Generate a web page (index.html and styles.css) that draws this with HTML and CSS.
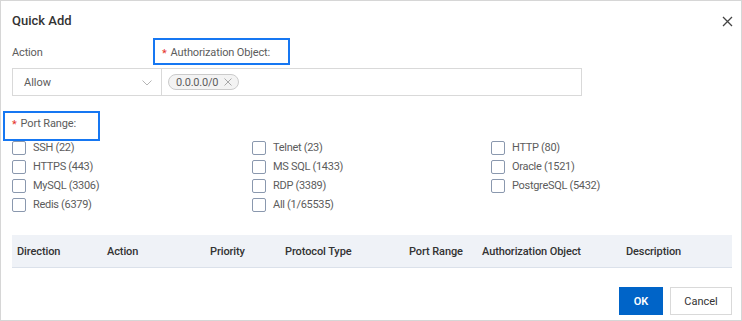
FILE: index.html
```html
<!DOCTYPE html>
<html lang="en">
<head>
    <meta charset="UTF-8">
    <title>Quick Add</title>
    <link rel="stylesheet" href="styles.css">
</head>
<body>

<div class="dialog">
    <div class="dlg-head">
        <h2>Quick Add</h2>
        <span class="close">
            <svg width="11" height="11" viewBox="0 0 11 11"><path d="M1 1 L10 10 M10 1 L1 10" stroke="#444" stroke-width="1.3" fill="none"/></svg>
        </span>
    </div>

    <div class="label-row">
        <span class="lbl lbl-action">Action</span>
        <span class="lbl req mark mark-auth">Authorization Object:</span>
    </div>

    <div class="input-row">
        <div class="select">
            <span>Allow</span>
            <svg width="10" height="6" viewBox="0 0 10 6"><path d="M0.5 0.5 L5 5 L9.5 0.5" stroke="#b5b5b5" stroke-width="1" fill="none"/></svg>
        </div>
        <div class="tag-input">
            <span class="tag">0.0.0.0/0
                <svg class="tag-x" width="8" height="8" viewBox="0 0 8 8"><path d="M0.5 0.5 L7.5 7.5 M7.5 0.5 L0.5 7.5" stroke="#a8a8a8" stroke-width="1" fill="none"/></svg>
            </span>
        </div>
    </div>

    <div class="port-label">
        <span class="lbl req mark mark-port">Port Range:</span>
    </div>

    <div class="checks">
        <label class="check"><span class="box"></span>SSH (22)</label>
        <label class="check"><span class="box"></span>Telnet (23)</label>
        <label class="check"><span class="box"></span>HTTP (80)</label>
        <label class="check"><span class="box"></span>HTTPS (443)</label>
        <label class="check"><span class="box"></span>MS SQL (1433)</label>
        <label class="check"><span class="box"></span>Oracle (1521)</label>
        <label class="check"><span class="box"></span>MySQL (3306)</label>
        <label class="check"><span class="box"></span>RDP (3389)</label>
        <label class="check"><span class="box"></span>PostgreSQL (5432)</label>
        <label class="check"><span class="box"></span>Redis (6379)</label>
        <label class="check"><span class="box"></span>All (1/65535)</label>
    </div>

    <div class="table-head">
        <span>Direction</span>
        <span>Action</span>
        <span>Priority</span>
        <span>Protocol Type</span>
        <span>Port Range</span>
        <span>Authorization Object</span>
        <span>Description</span>
    </div>

    <div class="dlg-foot">
        <button class="btn btn-ok">OK</button>
        <button class="btn">Cancel</button>
    </div>
</div>

</body>
</html>
```

FILE: styles.css
```css
html, body {
    margin: 0;
    padding: 0;
    background-color: #fff;
}
body {
    font-family: Roboto, "Liberation Sans", sans-serif;
    font-size: 11px;
    color: #5c5c5c;
}
.dialog {
    box-sizing: border-box;
    width: 742px;
    height: 321px;
    border: 1px solid #d6d6d6;
    padding: 0 9px 0 11px;
}
.dlg-head {
    display: flex;
    justify-content: space-between;
    align-items: flex-start;
    height: 37px;
    padding-top: 10px;
    box-sizing: border-box;
}
.dlg-head h2 {
    margin: 0;
    font-size: 13px;
    font-weight: 500;
    line-height: 20px;
    color: #333;
}
.close {
    display: block;
    margin-top: 5px;
    margin-right: -1px;
    line-height: 0;
}
.label-row {
    display: flex;
    height: 27px;
}
.lbl {
    line-height: 20px;
    color: #5c5c5c;
    letter-spacing: -0.15px;
}
.lbl-action {
    width: 150px;
    padding-top: 5px;
}
.req::before {
    content: "*";
    color: #e5322d;
    margin-right: 4px;
    position: relative;
    top: 1px;
}
.mark {
    position: relative;
}
.mark::after {
    content: "";
    position: absolute;
    box-sizing: border-box;
    border: 2px solid #1677f2;
}
.mark-auth {
    padding-top: 5px;
}
.mark-auth::after {
    left: -9px;
    top: 0;
    width: 137px;
    height: 27px;
}
.input-row {
    display: flex;
    margin-top: 3px;
    height: 28px;
}
.select {
    box-sizing: border-box;
    width: 150px;
    border: 1px solid #d9d9d9;
    display: flex;
    align-items: center;
    justify-content: space-between;
    padding: 0 9px 0 11px;
}
.select svg {
    margin-top: 2px;
}
.tag-input {
    box-sizing: border-box;
    width: 420px;
    border: 1px solid #d9d9d9;
    border-left: 0;
    display: flex;
    align-items: center;
    padding-left: 6px;
}
.tag {
    display: inline-flex;
    align-items: center;
    box-sizing: border-box;
    height: 16px;
    padding: 0 6px 0 7px;
    border: 1px solid #cbcbcb;
    border-radius: 8px;
    background-color: #f3f3f3;
    letter-spacing: -0.2px;
}
.tag-x {
    margin-left: 6px;
}
.port-label {
    margin-top: 18px;
    height: 20px;
    margin-bottom: 4px;
}
.mark-port::after {
    left: -9px;
    top: -6px;
    width: 97px;
    height: 30px;
}
.checks {
    display: grid;
    grid-template-columns: 240px 239px 1fr;
    grid-auto-rows: 19px;
}
.check {
    display: flex;
    align-items: center;
    letter-spacing: -0.3px;
}
.box {
    box-sizing: border-box;
    width: 14px;
    height: 14px;
    border: 1px solid #8a98ae;
    border-radius: 2px;
    margin-right: 7px;
    background-color: #fff;
}
.table-head {
    display: grid;
    grid-template-columns: 90px 103px 75px 124px 73px 144px 1fr;
    height: 33px;
    box-sizing: border-box;
    margin-top: 21px;
    background-color: #eff2f7;
    border-bottom: 1px solid #dbe1ea;
    align-items: center;
}
.table-head span {
    padding-left: 5px;
    padding-top: 1px;
    font-weight: 500;
    color: #333;
    letter-spacing: -0.1px;
}
.dlg-foot {
    display: flex;
    justify-content: flex-end;
    gap: 7px;
    margin-top: 19px;
}
.btn {
    box-sizing: border-box;
    height: 28px;
    width: 62px;
    border: 1px solid #d9d9d9;
    background-color: #fff;
    font-family: Roboto, "Liberation Sans", sans-serif;
    font-size: 11px;
    color: #333;
    padding: 0;
}
.btn-ok {
    width: 44px;
    border-color: #0064c8;
    background-color: #0064c8;
    color: #fff;
    font-weight: 600;
}
```
